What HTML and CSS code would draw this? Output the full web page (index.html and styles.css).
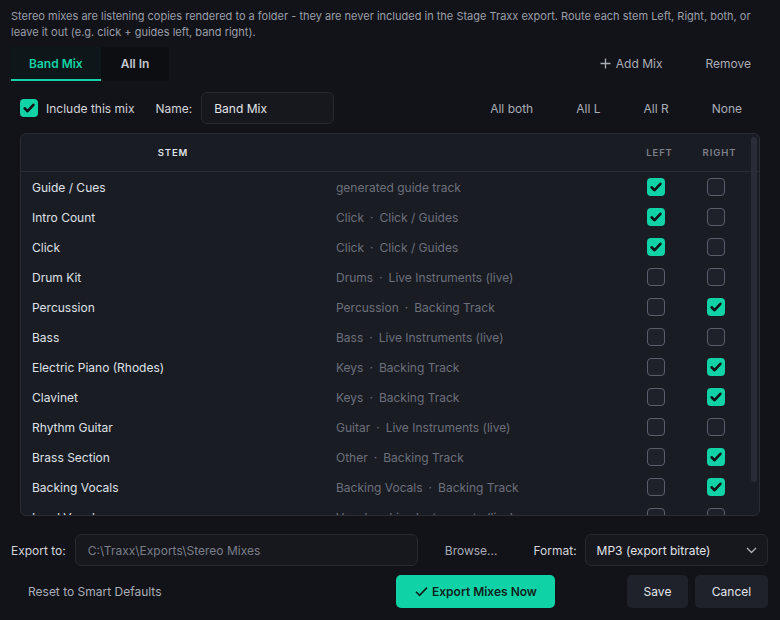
FILE: index.html
```html
<!DOCTYPE html>
<html>
<head>
<meta charset="utf-8">
<link rel="stylesheet" href="styles.css">
</head>
<body>
<div class="dialog">
  <p class="desc">Stereo mixes are listening copies rendered to a folder - they are never included in the Stage Traxx export. Route each stem Left, Right, both, or leave it out (e.g. click + guides left, band right).</p>

  <div class="tabbar">
    <div class="tabs">
      <div class="tab active">Band Mix</div>
      <div class="tab">All In</div>
    </div>
    <div class="tab-actions">
      <button class="ghost add"><svg width="11" height="11" viewBox="0 0 11 11"><path d="M5.5 0.5v10M0.5 5.5h10" stroke="#a9adb6" stroke-width="1.3" fill="none"/></svg>Add Mix</button>
      <button class="ghost remove">Remove</button>
    </div>
  </div>

  <div class="mixrow">
    <span class="cb on"><svg width="18" height="18" viewBox="0 0 18 18"><path d="M4.6 9.3l3 2.9 5.8-6.4" stroke="#101216" stroke-width="2.6" fill="none" stroke-linecap="round" stroke-linejoin="round"/></svg></span>
    <span class="lbl">Include this mix</span>
    <span class="lbl name-lbl">Name:</span>
    <div class="input name-input">Band Mix</div>
    <div class="quick">
      <button class="ghost q">All both</button>
      <button class="ghost q">All L</button>
      <button class="ghost q">All R</button>
      <button class="ghost q">None</button>
    </div>
  </div>

  <div class="panel">
    <div class="row head">
      <div class="c-name">STEM</div>
      <div class="c-cat"></div>
      <div class="c-l">LEFT</div>
      <div class="c-r">RIGHT</div>
    </div>
    <div class="rows" id="rows"></div>
    <div class="thumb"></div>
  </div>

  <div class="exportrow">
    <span class="lbl">Export to:</span>
    <div class="input path">C:\Traxx\Exports\Stereo Mixes</div>
    <button class="ghost browse">Browse...</button>
    <span class="lbl">Format:</span>
    <div class="input select">MP3 (export bitrate)<svg width="11" height="7" viewBox="0 0 11 7"><path d="M1 1l4.5 4.5L10 1" stroke="#a9adb6" stroke-width="1.4" fill="none"/></svg></div>
  </div>

  <div class="footer">
    <button class="ghost reset">Reset to Smart Defaults</button>
    <button class="primary"><svg width="13" height="11" viewBox="0 0 13 11"><path d="M1 5.8l3.6 3.6L12 1.6" stroke="#0d1f1b" stroke-width="1.6" fill="none"/></svg>Export Mixes Now</button>
    <div class="right">
      <button class="secondary save">Save</button>
      <button class="secondary cancel">Cancel</button>
    </div>
  </div>
</div>
<script src="app.js"></script>
</body>
</html>
```

FILE: app.js
```js
var data = [
  ["Guide / Cues", ["generated guide track"], 1, 0],
  ["Intro Count", ["Click", "Click / Guides"], 1, 0],
  ["Click", ["Click", "Click / Guides"], 1, 0],
  ["Drum Kit", ["Drums", "Live Instruments (live)"], 0, 0],
  ["Percussion", ["Percussion", "Backing Track"], 0, 1],
  ["Bass", ["Bass", "Live Instruments (live)"], 0, 0],
  ["Electric Piano (Rhodes)", ["Keys", "Backing Track"], 0, 1],
  ["Clavinet", ["Keys", "Backing Track"], 0, 1],
  ["Rhythm Guitar", ["Guitar", "Live Instruments (live)"], 0, 0],
  ["Brass Section", ["Other", "Backing Track"], 0, 1],
  ["Backing Vocals", ["Backing Vocals", "Backing Track"], 0, 1],
  ["Lead Vocals", ["Vocals", "Live Instruments (live)"], 0, 0]
];
var check = '<svg width="18" height="18" viewBox="0 0 18 18"><path d="M4.6 9.3l3 2.9 5.8-6.4" stroke="#101216" stroke-width="2.6" fill="none" stroke-linecap="round" stroke-linejoin="round"/></svg>';
function cb(on) { return '<span class="cb ' + (on ? 'on' : 'off') + '">' + (on ? check : '') + '</span>'; }
var html = '';
data.forEach(function (d) {
  var cat = d[1].join('<span class="dot">·</span>');
  html += '<div class="row"><div class="c-name">' + d[0] + '</div><div class="c-cat">' + cat +
    '</div><div class="c-l">' + cb(d[2]) + '</div><div class="c-r">' + cb(d[3]) + '</div></div>';
});
document.getElementById('rows').innerHTML = html;
```

FILE: styles.css
```css
* { box-sizing: border-box; }
html, body { margin: 0; padding: 0; }
body {
  width: 780px;
  height: 620px;
  overflow: hidden;
  background: #121318;
  font-family: Inter, "Noto Sans", sans-serif;
  color: #dfe1e6;
}
button {
  font-family: inherit;
  border: none;
  background: none;
  cursor: pointer;
}
.dialog {
  padding: 8px 12px 0 11px;
}
.desc {
  margin: 0;
  font-size: 11px;
  line-height: 16px;
  color: #9a9ea8;
}
.tabbar {
  margin-top: 7px;
  display: flex;
  align-items: center;
  justify-content: space-between;
  height: 34px;
}
.tabs { display: flex; height: 34px; }
.tab {
  height: 34px;
  padding: 0 20px;
  display: flex;
  align-items: center;
  font-size: 12px;
  font-weight: 600;
  color: #c4c7ce;
  background: #0d0e12;
  border-bottom: 2px solid transparent;
}
.tab.active {
  color: #13d3a6;
  background: #0d1618;
  border-bottom-color: #13d3a6;
  padding: 0 18px;
}
.tab-actions { display: flex; align-items: center; gap: 19px; padding-right: 5px; margin-top: -2px; }
.ghost {
  font-size: 12px;
  color: #a9adb6;
  height: 30px;
  padding: 0 12px;
  display: flex;
  align-items: center;
}
.add svg { margin-right: 5px; }
.mixrow {
  margin-top: 11px;
  height: 32px;
  display: flex;
  align-items: center;
  padding-left: 9px;
}
.cb {
  width: 18px;
  height: 18px;
  border-radius: 4px;
  display: inline-block;
  flex: none;
}
.cb svg { display: block; }
.cb.on { background: #0fd3a7; }
.cb.off { background: #1e2129; border: 1.5px solid #5a5e6a; }
.lbl {
  font-size: 12px;
  color: #d3d5db;
}
.mixrow .cb + .lbl { margin-left: 8px; }
.name-lbl { margin-left: 21px; }
.input {
  height: 32px;
  border-radius: 6px;
  background: #16181e;
  border: 1px solid #262932;
  font-size: 12px;
  display: flex;
  align-items: center;
  padding: 0 12px;
}
.name-input {
  margin-left: 9px;
  width: 133px;
  color: #e3e5ea;
}
.quick {
  margin-left: auto;
  display: flex;
  gap: 1px;
  padding-right: 5px;
}
.q { padding: 0 21px; }
.panel {
  position: relative;
  margin: 9px 8px 0 9px;
  height: 383px;
  background: #1a1c24;
  border: 1px solid #2a2d36;
  border-radius: 6px;
  overflow: hidden;
}
.row {
  display: grid;
  grid-template-columns: 304px 301px 60px 60px;
  height: 30px;
  align-items: center;
  font-size: 12px;
}
.row > div { padding: 0 11px; white-space: nowrap; }
.row .c-l, .row .c-r { padding: 0; display: flex; justify-content: center; }
.row.head {
  height: 38px;
  border-bottom: 1px solid #2a2d36;
  font-size: 9.5px;
  font-weight: 600;
  letter-spacing: 0.9px;
  color: #7d818b;
}
.row.head .c-name { text-align: center; padding: 0; }
.row.head .c-l, .row.head .c-r { padding-left: 7px; }
.c-name { color: #dfe1e6; }
.c-cat { color: #6c707b; }
.dot { margin: 0 6px; }
.thumb {
  position: absolute;
  top: 3px;
  left: 730px;
  width: 6px;
  height: 345px;
  border-radius: 3px;
  background: #2a2d37;
}
.exportrow {
  margin-top: 18px;
  height: 32px;
  display: flex;
  align-items: center;
}
.path {
  margin-left: 9px;
  width: 343px;
  color: #7b7f89;
}
.browse { margin: 0 23px 0 14px; padding: 0 13px; }
.select {
  margin-left: 8px;
  flex: 1;
  color: #e0e2e8;
  justify-content: space-between;
  padding: 0 10px 0 11px;
}
.footer {
  margin-top: 9px;
  height: 33px;
  display: flex;
  align-items: center;
}
.reset { padding: 0 17px; }
.primary {
  margin-left: 218px;
  width: 159px;
  height: 33px;
  border-radius: 5px;
  background: #0fd3a7;
  color: #0d1f1b;
  font-size: 12px;
  font-weight: 600;
  display: flex;
  align-items: center;
  justify-content: center;
  gap: 4px;
}
.right { margin-left: auto; display: flex; gap: 7px; }
.secondary {
  height: 33px;
  border-radius: 5px;
  background: #1f222b;
  color: #e3e5ea;
  font-size: 12px;
  padding: 0;
}
.save { width: 61px; }
.cancel { width: 73px; }
```
